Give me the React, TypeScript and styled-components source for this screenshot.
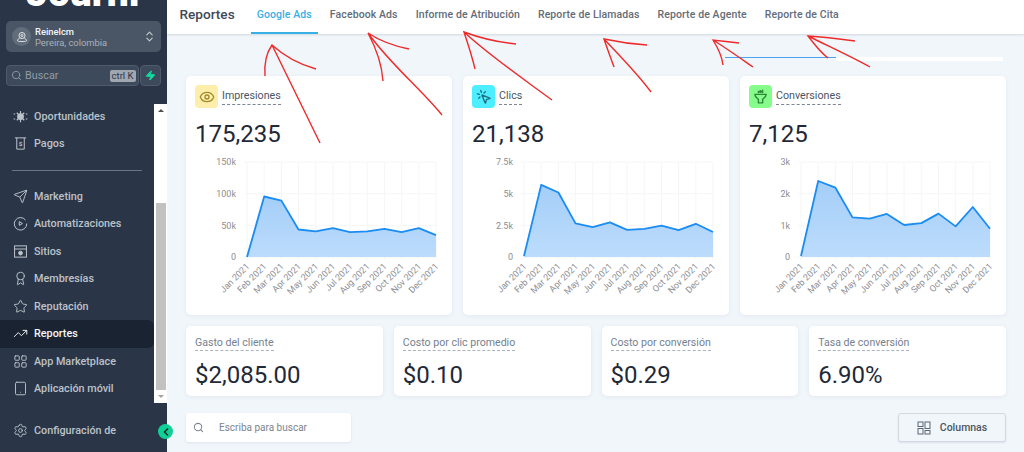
import React from "react";
import styled, { createGlobalStyle } from "styled-components";
import {
  Award,
  ChevronsUpDown,
  Eye,
  LayoutGrid,
  MousePointerClick,
  Search,
  Send,
  Settings,
  Star,
  Tablet,
  TrendingUp,
  Zap,
  ChevronLeft,
} from "lucide-react";

const GlobalStyle = createGlobalStyle`
  html, body {
    margin: 0;
    padding: 0;
    width: 1024px;
    height: 452px;
    overflow: hidden;
    font-family: Roboto, "Liberation Sans", sans-serif;
  }
  * { box-sizing: border-box; }
`;

const Page = styled.div`
  position: relative;
  display: flex;
  width: 1024px;
  height: 452px;
  overflow: hidden;
  background: #f1f6fb;
`;

const Sidebar = styled.aside`
  flex: 0 0 166.5px;
  min-width: 0;
  display: flex;
  flex-direction: column;
  background: #2a3648;
`;

const LogoClip = styled.div`
  height: 8px;
  padding-left: 26px;
  overflow: hidden;
  display: flex;
  align-items: flex-end;
`;

const LogoText = styled.span`
  color: #fff;
  font-size: 39px;
  font-weight: 900;
  line-height: 39px;
  margin-bottom: -5px;
`;

const LocationBox = styled.div`
  display: flex;
  align-items: center;
  height: 31px;
  margin: 13px 6px 0;
  padding: 0 5px 0 6px;
  border-radius: 5px;
  background: #4a5666;
`;

const LocationAvatar = styled.span`
  display: flex;
  align-items: center;
  justify-content: center;
  width: 19px;
  height: 19px;
  border-radius: 50%;
  background: #626d7b;
  color: #e4e7ea;
`;

const LocationText = styled.div`
  flex: 1;
  margin-left: 4px;
  line-height: 11px;
  font-size: 9.4px;
`;

const LocationName = styled.div`
  color: #f3f4f6;
  font-weight: 500;
`;

const LocationCity = styled.div`
  color: #aab1ba;
`;

const SearchRow = styled.div`
  display: flex;
  gap: 1px;
  height: 21px;
  margin: 13px 6px 0;
`;

const SearchBox = styled.div`
  flex: 1;
  display: flex;
  align-items: center;
  gap: 3px;
  padding: 0 2px 0 4px;
  border: 1px solid #4f5b6a;
  border-radius: 4px;
  background: #3d4a5b;
  color: #929ba6;
  font-size: 10.8px;
`;

const SearchLabel = styled.span`
  flex: 1;
`;

const KeyBadge = styled.span`
  padding: 0 2px;
  border-radius: 2px;
  background: #a0a7b1;
  color: #2a3648;
  font-size: 9.5px;
  line-height: 12px;
`;

const BoltBox = styled.div`
  flex: 0 0 21px;
  display: flex;
  align-items: center;
  justify-content: center;
  border: 1px solid #4f5b6a;
  border-radius: 4px;
  background: #3d4a5b;
  color: #12d99c;
`;

const NavArea = styled.div`
  display: flex;
  height: 299px;
  margin-top: 18px;
  overflow: hidden;
`;

const NavList = styled.nav`
  flex: 1;
  margin-top: -1.5px;
`;

const NavItem = styled.div<{ $active?: boolean }>`
  display: flex;
  align-items: center;
  gap: 6px;
  height: 27.5px;
  padding-left: 13px;
  border-radius: 0 6px 6px 0;
  background: ${(p) => (p.$active ? "#1a2331" : "transparent")};
  color: ${(p) => (p.$active ? "#f5f6f8" : "#bdc2c9")};
  font-size: 10.8px;
  font-weight: 500;
`;

const NavDivider = styled.div`
  height: 1px;
  margin: 12.5px 12px 11.7px;
  background: #6b7583;
`;

const ScrollTrack = styled.div`
  position: relative;
  flex: 0 0 13px;
  background: #fff;
`;

const ScrollThumb = styled.div`
  position: absolute;
  top: 99px;
  left: 2px;
  width: 10px;
  height: 187px;
  background: #c1c1c1;
`;

const ScrollArrow = styled.div<{ $up?: boolean }>`
  position: absolute;
  left: 4px;
  ${(p) => (p.$up ? "top: 5px;" : "bottom: 5px;")}
  border-left: 3px solid transparent;
  border-right: 3px solid transparent;
  ${(p) => (p.$up ? "border-bottom: 3px solid #505050;" : "border-top: 3px solid #a3a3a3;")}
`;

const SettingsRow = styled(NavItem)`
  margin-top: 14px;
`;

const CollapseButton = styled.div`
  position: absolute;
  left: 158px;
  top: 424px;
  display: flex;
  align-items: center;
  justify-content: center;
  width: 15px;
  height: 15px;
  border-radius: 50%;
  background: #0fd096;
  color: #12312b;
`;

const Main = styled.main`
  flex: 1;
  min-width: 0;
  display: flex;
  flex-direction: column;
`;

const Header = styled.header`
  display: flex;
  align-items: stretch;
  height: 34px;
  padding-left: 13px;
  background: #fff;
  box-shadow: 0 1px 2px rgba(40, 60, 80, 0.16);
`;

const HeaderTitle = styled.h1`
  margin: 0 16px 0 0;
  color: #3f4a58;
  font-size: 13.6px;
  font-weight: 500;
  line-height: 29px;
`;

const TabList = styled.div`
  display: flex;
  gap: 6px;
`;

const Tab = styled.a<{ $active?: boolean }>`
  padding: 0 6px;
  border-bottom: 2px solid ${(p) => (p.$active ? "#37b0e5" : "transparent")};
  color: ${(p) => (p.$active ? "#37b0e5" : "#636c78")};
  font-size: 10.5px;
  font-weight: 500;
  letter-spacing: 0.1px;
  line-height: 30px;
`;

const Content = styled.div`
  flex: 1;
  padding: 23px 18px 0 19.5px;
`;

const ProgressRow = styled.div`
  display: flex;
  height: 4px;
  margin: 0 3px 15px 539px;
`;

const ProgressLine = styled.div`
  flex: 0 0 111px;
  height: 1px;
  background: #4aa3f0;
`;

const ProgressRest = styled.div`
  flex: 1;
  background: #fff;
`;

const ChartGrid = styled.div`
  display: grid;
  grid-template-columns: repeat(3, 1fr);
  gap: 11px;
`;

const Card = styled.section`
  height: 239px;
  padding: 9px 0 0 9px;
  border-radius: 5px;
  background: #fff;
  box-shadow: 0 1px 4px rgba(60, 80, 100, 0.08);
`;

const CardHead = styled.div`
  display: flex;
  align-items: center;
  gap: 4px;
`;

const IconBox = styled.span<{ $bg: string; $fg: string }>`
  display: flex;
  align-items: center;
  justify-content: center;
  width: 23px;
  height: 23px;
  border-radius: 4px;
  background: ${(p) => p.$bg};
  color: ${(p) => p.$fg};
`;

const CardTitle = styled.span`
  padding-bottom: 1px;
  border-bottom: 1px dashed #7c8591;
  color: #4b5563;
  font-size: 10.7px;
  line-height: 14px;
`;

const BigValue = styled.div`
  color: #1f2937;
  font-size: 24px;
  line-height: 28px;
`;

const CardValue = styled(BigValue)`
  margin-top: 12px;
`;

const ChartSvg = styled.svg`
  display: block;
  margin: 8px 0 0 -9px;
`;

const StatGrid = styled.div`
  display: grid;
  grid-template-columns: repeat(4, 1fr);
  gap: 11px;
  margin-top: 11px;
`;

const StatCard = styled.section`
  height: 70px;
  padding: 5px 0 0 9px;
  border-radius: 5px;
  background: #fff;
  box-shadow: 0 1px 4px rgba(60, 80, 100, 0.08);
`;

const StatTitle = styled.span`
  padding-bottom: 1px;
  border-bottom: 1px dashed #aab3bd;
  color: #74818e;
  font-size: 10.6px;
  line-height: 14px;
`;

const StatValue = styled(BigValue)`
  margin-top: 11px;
`;

const BottomRow = styled.div`
  display: flex;
  justify-content: space-between;
  height: 29px;
  margin-top: 17px;
`;

const TableSearch = styled.div`
  display: flex;
  align-items: center;
  gap: 15px;
  width: 165px;
  padding-left: 7px;
  border-radius: 3px;
  background: #fff;
  box-shadow: 0 1px 3px rgba(60, 80, 100, 0.1);
  color: #7c8591;
  font-size: 10px;
`;

const ColumnsButton = styled.button`
  display: flex;
  align-items: center;
  justify-content: center;
  gap: 9px;
  width: 108px;
  border: 1px solid #d3d9e0;
  border-radius: 3px;
  background: #f1f6fb;
  box-shadow: 0 1px 2px rgba(60, 80, 100, 0.12);
  color: #4b5563;
  font-family: inherit;
  font-size: 10.5px;
  font-weight: 500;
`;

const Annotations = styled.svg`
  position: absolute;
  inset: 0;
  pointer-events: none;
`;

const months = [
  "Jan 2021", "Feb 2021", "Mar 2021", "Apr 2021", "May 2021", "Jun 2021",
  "Jul 2021", "Aug 2021", "Sep 2021", "Oct 2021", "Nov 2021", "Dec 2021",
];

const PLOT_LEFT = 61;
const PLOT_RIGHT = 250;
const PLOT_TOP = 6;
const PLOT_BOTTOM = 101;

type ChartProps = { id: string; max: number; ticks: string[]; values: number[] };

// area chart, values are read off the reference
const AreaChart = ({ id, max, ticks, values }: ChartProps) => {
  const step = (PLOT_RIGHT - PLOT_LEFT) / 11;
  const xAt = (i: number) => PLOT_LEFT + step * i;
  const yAt = (v: number) => PLOT_BOTTOM - (v / max) * (PLOT_BOTTOM - PLOT_TOP);
  const line = values.map((v, i) => `${xAt(i).toFixed(1)},${yAt(v).toFixed(1)}`).join(" ");
  const rowGap = (PLOT_BOTTOM - PLOT_TOP) / (ticks.length - 1);

  return (
    <ChartSvg width={266} height={150}>
      <defs>
        <linearGradient id={id} x1="0" y1="0" x2="0" y2="1">
          <stop offset="0" stopColor="#a4cef8" />
          <stop offset="1" stopColor="#bcdcfc" />
        </linearGradient>
      </defs>
      {months.map((_, i) => (
        <line key={i} x1={xAt(i)} x2={xAt(i)} y1={PLOT_TOP} y2={PLOT_BOTTOM + 3} stroke="#f5f6f7" />
      ))}
      {ticks.map((t, i) => {
        const y = PLOT_BOTTOM - rowGap * i;
        return (
          <g key={t}>
            <line x1={PLOT_LEFT - 3} x2={PLOT_RIGHT} y1={y} y2={y} stroke="#f5f6f7" />
            <text x={PLOT_LEFT - 11} y={y + 3.2} textAnchor="end" fontSize="9" fill="#8b8e93">
              {t}
            </text>
          </g>
        );
      })}
      <polygon
        points={`${xAt(0)},${PLOT_BOTTOM} ${line} ${PLOT_RIGHT},${PLOT_BOTTOM}`}
        fill={`url(#${id})`}
      />
      <polyline points={line} fill="none" stroke="#1a8cf2" strokeWidth="1.8" strokeLinejoin="round" />
      {months.map((m, i) => (
        <text
          key={m}
          textAnchor="end"
          fontSize="9"
          fill="#8b8e93"
          transform={`translate(${xAt(i) + 3} ${PLOT_BOTTOM + 10}) rotate(-45)`}
        >
          {m}
        </text>
      ))}
    </ChartSvg>
  );
};

const PinIcon = () => (
  <svg width="12" height="12" viewBox="0 0 24 24" fill="none" stroke="currentColor" strokeWidth="2">
    <circle cx="12" cy="9" r="6" />
    <circle cx="12" cy="9" r="2" />
    <path d="M7 15c-2 .6-4 2-4 4 0 1.500 2 2 9 2s9-.5 9-2c0-2-2-3.400-4-4" />
  </svg>
);

const NetworkIcon = () => (
  <svg width="15" height="15" viewBox="0 0 24 24" fill="currentColor" stroke="currentColor" strokeWidth="1.8">
    <circle cx="12" cy="12" r="4.500" />
    <path d="M12 3v18M6 6l12 12M18 6 6 18" fill="none" />
    <path d="M1 8h2.500M1 16h2.500M20.500 8H23M20.500 16H23" fill="none" />
  </svg>
);

const ReceiptIcon = () => (
  <svg width="15" height="15" viewBox="0 0 24 24" fill="none" stroke="currentColor" strokeWidth="1.6">
    <path d="M3 3h18M6 3v18h12V3" />
    <text x="12" y="16" textAnchor="middle" fontSize="10" fontWeight="700" fill="currentColor" stroke="none">
      $
    </text>
  </svg>
);

const PlayCircleIcon = () => (
  <svg width="15" height="15" viewBox="0 0 24 24" fill="none" stroke="currentColor" strokeWidth="1.6">
    <path d="M20 6.500A10 10 0 1 0 22 12" />
    <path d="M10 9l5 3-5 3z" />
  </svg>
);

const BrowserIcon = () => (
  <svg width="15" height="15" viewBox="0 0 24 24" fill="none" stroke="currentColor" strokeWidth="1.6">
    <rect x="2.500" y="3" width="19" height="18" />
    <path d="M2.500 8h19" />
    <circle cx="12" cy="14.500" r="3" fill="currentColor" />
  </svg>
);

const FunnelIcon = () => (
  <svg width="17" height="17" viewBox="0 0 24 24" fill="none" stroke="currentColor" strokeWidth="2" strokeLinejoin="round">
    <path d="M4 9h16c0 3-3 5-5 7v5H9v-5C7 14 4 12 4 9z" />
    <path d="M9 6.500V5M15 6.500V3" strokeLinecap="round" />
    <circle cx="12" cy="5" r="1.200" fill="currentColor" />
  </svg>
);

const ColumnsIcon = () => (
  <svg width="14" height="14" viewBox="0 0 14 14" fill="none" stroke="#5c6672" strokeWidth="1">
    <rect x="1" y="1" width="5" height="4.500" />
    <rect x="8" y="1" width="5" height="6.500" />
    <rect x="1" y="7.500" width="5" height="5.500" />
    <rect x="8" y="9.500" width="5" height="3.500" />
  </svg>
);

const navTop = [
  { label: "Oportunidades", icon: <NetworkIcon /> },
  { label: "Pagos", icon: <ReceiptIcon /> },
];

const navBottom = [
  { label: "Marketing", icon: <Send size={15} strokeWidth={1.5} /> },
  { label: "Automatizaciones", icon: <PlayCircleIcon /> },
  { label: "Sitios", icon: <BrowserIcon /> },
  { label: "Membresías", icon: <Award size={15} strokeWidth={1.5} /> },
  { label: "Reputación", icon: <Star size={15} strokeWidth={1.5} /> },
  { label: "Reportes", icon: <TrendingUp size={15} strokeWidth={1.5} />, active: true },
  { label: "App Marketplace", icon: <LayoutGrid size={15} strokeWidth={1.5} /> },
  { label: "Aplicación móvil", icon: <Tablet size={15} strokeWidth={1.5} /> },
];

const tabs = [
  "Google Ads",
  "Facebook Ads",
  "Informe de Atribución",
  "Reporte de Llamadas",
  "Reporte de Agente",
  "Reporte de Cita",
];

const charts = [
  {
    id: "impresiones",
    title: "Impresiones",
    value: "175,235",
    bg: "#fdeeab",
    fg: "#a08a2e",
    icon: <Eye size={16} strokeWidth={2} />,
    max: 150,
    ticks: ["0", "50k", "100k", "150k"],
    values: [0, 95.5, 89, 43.5, 40.4, 45.6, 39.3, 40.4, 44.6, 39.3, 45.6, 34.6],
  },
  {
    id: "clics",
    title: "Clics",
    value: "21,138",
    bg: "#4deeff",
    fg: "#1f6f80",
    icon: <MousePointerClick size={16} strokeWidth={2} />,
    max: 7.5,
    ticks: ["0", "2.5k", "5k", "7.5k"],
    values: [0.08, 5.69, 5.09, 2.65, 2.36, 2.73, 2.15, 2.23, 2.47, 2.12, 2.62, 1.97],
  },
  {
    id: "conversiones",
    title: "Conversiones",
    value: "7,125",
    bg: "#86fd8a",
    fg: "#2c8a3a",
    icon: <FunnelIcon />,
    max: 3,
    ticks: ["0", "1k", "2k", "3k"],
    values: [0.03, 2.4, 2.19, 1.25, 1.21, 1.36, 1.01, 1.07, 1.37, 0.965, 1.58, 0.89],
  },
];

const stats = [
  { title: "Gasto del cliente", value: "$2,085.00" },
  { title: "Costo por clic promedio", value: "$0.10" },
  { title: "Costo por conversión", value: "$0.29" },
  { title: "Tasa de conversión", value: "6.90%" },
];

// red hand-drawn arrows on the screenshot
const arrows = [
  "M265 76C264 62 267 52 272 45C284 56 298 64 316 69M272 45L320 143",
  "M383 81C382 66 376 48 368 33C380 41 394 46 409 49M368 33C390 64 420 88 442 115",
  "M475 69C472 56 468 44 464 32C480 38 496 42 516 44M464 32C490 56 522 78 552 100",
  "M614 67C610 56 607 48 604 39C618 42 632 44 647 45M604 39C620 56 638 74 651 92",
  "M723 65C722 56 718 48 713 40C722 41 730 42 739 43M713 40C726 48 740 58 753 67",
  "M828 58C820 52 814 44 808 36C824 37 840 39 855 41M808 36C828 46 850 56 870 67",
];

const App: React.FC = () => {
  return (
    <Page>
      <GlobalStyle />
      <Sidebar>
        <LogoClip>
          <LogoText>Journi</LogoText>
        </LogoClip>
        <LocationBox>
          <LocationAvatar>
            <PinIcon />
          </LocationAvatar>
          <LocationText>
            <LocationName>Reinelcm</LocationName>
            <LocationCity>Pereira, colombia</LocationCity>
          </LocationText>
          <ChevronsUpDown size={13} color="#c6cbd1" />
        </LocationBox>
        <SearchRow>
          <SearchBox>
            <Search size={11} />
            <SearchLabel>Buscar</SearchLabel>
            <KeyBadge>ctrl K</KeyBadge>
          </SearchBox>
          <BoltBox>
            <Zap size={11} fill="currentColor" />
          </BoltBox>
        </SearchRow>
        <NavArea>
          <NavList>
            {navTop.map((item) => (
              <NavItem key={item.label}>
                {item.icon}
                {item.label}
              </NavItem>
            ))}
            <NavDivider />
            {navBottom.map((item) => (
              <NavItem key={item.label} $active={item.active}>
                {item.icon}
                {item.label}
              </NavItem>
            ))}
          </NavList>
          <ScrollTrack>
            <ScrollArrow $up />
            <ScrollThumb />
            <ScrollArrow />
          </ScrollTrack>
        </NavArea>
        <SettingsRow>
          <Settings size={15} strokeWidth={1.5} />
          Configuración de
        </SettingsRow>
      </Sidebar>

      <Main>
        <Header>
          <HeaderTitle>Reportes</HeaderTitle>
          <TabList>
            {tabs.map((tab, i) => (
              <Tab key={tab} $active={i === 0}>
                {tab}
              </Tab>
            ))}
          </TabList>
        </Header>
        <Content>
          <ProgressRow>
            <ProgressLine />
            <ProgressRest />
          </ProgressRow>
          <ChartGrid>
            {charts.map((c) => (
              <Card key={c.id}>
                <CardHead>
                  <IconBox $bg={c.bg} $fg={c.fg}>
                    {c.icon}
                  </IconBox>
                  <CardTitle>{c.title}</CardTitle>
                </CardHead>
                <CardValue>{c.value}</CardValue>
                <AreaChart id={c.id} max={c.max} ticks={c.ticks} values={c.values} />
              </Card>
            ))}
          </ChartGrid>
          <StatGrid>
            {stats.map((s) => (
              <StatCard key={s.title}>
                <StatTitle>{s.title}</StatTitle>
                <StatValue>{s.value}</StatValue>
              </StatCard>
            ))}
          </StatGrid>
          <BottomRow>
            <TableSearch>
              <Search size={11} strokeWidth={2.2} />
              Escriba para buscar
            </TableSearch>
            <ColumnsButton>
              <ColumnsIcon />
              Columnas
            </ColumnsButton>
          </BottomRow>
        </Content>
      </Main>

      <CollapseButton>
        <ChevronLeft size={12} strokeWidth={3.5} />
      </CollapseButton>

      <Annotations width="1024" height="452">
        {arrows.map((d) => (
          <path key={d} d={d} fill="none" stroke="#ee2a2a" strokeWidth="1.4" />
        ))}
      </Annotations>
    </Page>
  );
};

export default App;
